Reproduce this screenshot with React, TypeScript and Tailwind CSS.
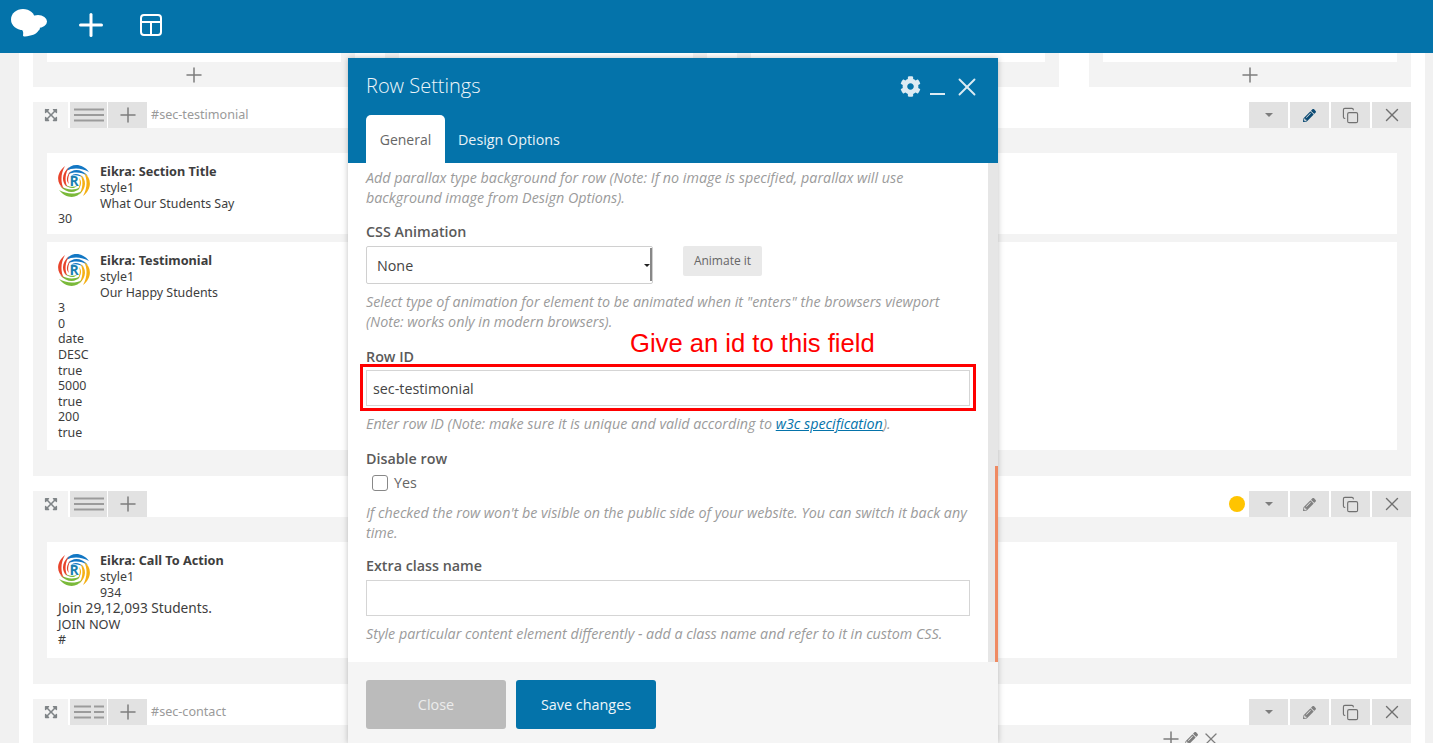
import React from "react";
import { Plus, X, Copy } from "lucide-react";
import { FaExpandArrowsAlt, FaPencilAlt, FaCog } from "react-icons/fa";

const bgFont = { fontFamily: '"Noto Sans", sans-serif' };

function Swirl() {
  const blades = [
    { c: "#1277c4", a: 0 },
    { c: "#f5b014", a: 90 },
    { c: "#7ab93a", a: 180 },
    { c: "#e8432a", a: 270 },
  ];
  return (
    <svg width="34" height="34" viewBox="0 0 34 34" className="-ml-px shrink-0" aria-hidden>
      {blades.map((b) => (
        <g key={b.a} transform={`rotate(${b.a} 17 17)`} fill={b.c}>
          <path d="M9 7 C14 -1 25 -1 32 8 C25 4 16 3 9 7Z" />
          <path d="M11 10.5 C15 4.5 24 4 31 12 C24 8 17 7.5 11 10.5Z" />
          <path d="M14 12 C17 9 22 9 27 14 C22 11 18 10.5 14 12Z" />
        </g>
      ))}
      <text x="17" y="22" textAnchor="middle" fontSize="14" fontWeight="700" fill="#1a7fb0" style={{ fontFamily: '"Open Sans", sans-serif' }}>
        R
      </text>
    </svg>
  );
}

function Bars({ split }: { split?: boolean }) {
  return (
    <svg width="30" height="14" viewBox="0 0 30 14" aria-hidden>
      {[1.5, 7, 12.5].map((y) => (
        <g key={y}>
          {split ? (
            <>
              <rect x="0" y={y - 1} width="17" height="2" fill="#9b9b9b" />
              <rect x="20" y={y - 1} width="10" height="2" fill="#9b9b9b" />
            </>
          ) : (
            <rect x="0" y={y - 1} width="30" height="2" fill="#9b9b9b" />
          )}
        </g>
      ))}
    </svg>
  );
}

function RowHeader({ id, split, active, dot }: { id?: string; split?: boolean; active?: boolean; dot?: boolean }) {
  return (
    <div className="flex h-[26px] items-stretch justify-between bg-white">
      <div className="flex items-stretch">
        <div className="flex w-[35px] items-center justify-center bg-[#f3f3f3] text-[#7f8487]">
          <FaExpandArrowsAlt size={14} />
        </div>
        <div className="ml-[2px] flex w-[37px] items-center justify-center bg-[#e2e2e2]">
          <Bars split={split} />
        </div>
        <div className="ml-px flex w-[39px] items-center justify-center bg-[#e2e2e2] text-[#7d7d7d]">
          <Plus size={24} strokeWidth={1.5} />
        </div>
        {id && (
          <span className="ml-1 self-center text-[12.6px] text-[#9a9a9a]" style={bgFont}>
            {id}
          </span>
        )}
      </div>
      <div className="flex items-stretch gap-[2px]">
        {dot && <span className="mr-[2px] h-4 w-4 self-center rounded-full bg-[#ffc400]" />}
        <div className="flex w-[39px] items-center justify-center bg-[#e2e2e2]">
          <span className="h-0 w-0 border-x-[4px] border-t-[4px] border-x-transparent border-t-[#7d7d7d]" />
        </div>
        <div className={`flex w-[39px] items-center justify-center bg-[#e2e2e2] ${active ? "text-[#0b4a73]" : "text-[#808080]"}`}>
          <FaPencilAlt size={13} />
        </div>
        <div className="flex w-[39px] items-center justify-center bg-[#e2e2e2] text-[#707070]">
          <Copy size={17} strokeWidth={1.6} />
        </div>
        <div className="flex w-[39px] items-center justify-center bg-[#e2e2e2] text-[#707070]">
          <X size={22} strokeWidth={1.5} />
        </div>
      </div>
    </div>
  );
}

function Card({
  title,
  inner,
  rest,
  className,
  bigFirst,
}: {
  title: string;
  inner: string[];
  rest: string[];
  className: string;
  bigFirst?: boolean;
}) {
  return (
    <div className={`bg-white px-[11px] pt-[11px] text-[12.4px] leading-[15.6px] text-[#3d3d3d] ${className}`} style={bgFont}>
      <div className="flex gap-[9px]">
        <Swirl />
        <div className="pt-[0.4px]">
          <div className="text-[12.7px] font-bold">{title}</div>
          {inner.map((t) => (
            <div key={t}>{t}</div>
          ))}
        </div>
      </div>
      {rest.map((t, i) => (
        <div key={i} className={bigFirst && i === 0 ? "text-[13.7px] leading-[16.5px]" : bigFirst && i === 1 ? "text-[12.8px]" : ""}>
          {t}
        </div>
      ))}
    </div>
  );
}

function Hint({ children, className = "" }: { children: React.ReactNode; className?: string }) {
  return <p className={`text-[14.3px] italic leading-[20px] text-[#9b9b9b] ${className}`}>{children}</p>;
}

function Label({ children, className = "" }: { children: React.ReactNode; className?: string }) {
  return <div className={`-mb-[2px] text-[14.3px] font-semibold leading-[22px] text-[#5a5a5a] ${className}`}>{children}</div>;
}

function Modal() {
  return (
    <div
      className="absolute left-[348px] top-[58px] flex h-[685px] w-[650px] flex-col bg-white shadow-[0_0_6px_rgba(0,0,0,0.25)]"
      style={{ fontFamily: '"Open Sans", sans-serif' }}
    >
      <div className="h-[105px] shrink-0 bg-[#0473aa]">
        <div className="flex h-[57px] items-center justify-between pl-[18px] pr-[16px]">
          <span className="-mt-[2px] text-[20px] font-light text-[#eef6fa]">Row Settings</span>
          <div className="flex items-center text-[#dcebf3]">
            <FaCog size={21} />
            <span className="ml-[9px] mt-[14px] h-[2px] w-[15px] bg-[#dcebf3]" />
            <X size={30} strokeWidth={1.5} className="ml-[7px]" />
          </div>
        </div>
        <div className="flex pl-[18px] text-[14.3px]">
          <div className="flex h-[48px] w-[79px] items-center justify-center rounded-t-[5px] bg-white text-[14px] text-[#666]">General</div>
          <div className="flex h-[48px] items-center pl-[13px] pt-[2px] text-[#e8f2f7]">Design Options</div>
        </div>
      </div>
      <div className="relative flex h-[499px] shrink-0 overflow-hidden">
        <div className="flex-1 pl-[18px] pr-[18px] pt-[5px]">
          <Hint>
            Add parallax type background for row (Note: If no image is specified, parallax will use
            <br />
            background image from Design Options).
          </Hint>
          <Label className="mt-[13px]">CSS Animation</Label>
          <div className="mt-[5px] flex items-start">
            <div className="relative flex h-[38px] w-[287px] items-center rounded-[2px] border border-[#d0d0d0] pl-[10px] pt-[2px] text-[14.3px] text-[#444]">
              None
              <span className="absolute right-[2px] top-[17px] h-0 w-0 border-x-[3px] border-t-[3px] border-x-transparent border-t-[#222]" />
              <span className="absolute right-0 top-[1px] h-[33px] w-[2px] bg-[#888]" />
            </div>
            <div className="ml-[30px] flex h-[30px] w-[79px] items-center justify-center rounded-[2px] bg-[#e9e9e9] text-[12px] text-[#666]">
              Animate it
            </div>
          </div>
          <Hint className="mt-[8px]">
            Select type of animation for element to be animated when it "enters" the browsers viewport
            <br />
            (Note: works only in modern browsers).
          </Hint>
          <Label className="mt-[14px]">Row ID</Label>
          <div className="mt-[4px] flex h-[36px] items-center border border-[#d5d5d5] pl-[6px] pt-[2px] text-[14.3px] text-[#444]">sec-testimonial</div>
          <Hint className="mt-[8px]">
            Enter row ID (Note: make sure it is unique and valid according to{" "}
            <span className="text-[#0473aa] underline">w3c specification</span>).
          </Hint>
          <Label className="mt-[14px]">Disable row</Label>
          <div className="mt-[5px] flex items-center pl-[6px] text-[14.3px] leading-[20px] text-[#666]">
            <span className="h-[16px] w-[16px] rounded-[3px] border border-[#888] bg-white" />
            <span className="ml-[6px]">Yes</span>
          </div>
          <Hint className="mt-[10px]">
            If checked the row won't be visible on the public side of your website. You can switch it back any
            <br />
            time.
          </Hint>
          <Label className="mt-[12px]">Extra class name</Label>
          <div className="mt-[5px] h-[36px] border border-[#d5d5d5]" />
          <Hint className="mt-[8px]">Style particular content element differently - add a class name and refer to it in custom CSS.</Hint>
        </div>
        <div className="relative w-[10px] shrink-0 bg-[#e6e6e6]">
          <div className="absolute bottom-0 right-0 h-[196px] w-[3px] bg-[#ef8a62]" />
        </div>
      </div>
      <div className="flex flex-1 items-start gap-[10px] bg-[#f5f5f5] pl-[18px] pt-[18px] text-[14.4px]">
        <div className="flex h-[49px] w-[140px] items-center justify-center rounded-[3px] bg-[#bbbbbb] text-[#ececec]">Close</div>
        <div className="flex h-[49px] w-[140px] items-center justify-center rounded-[3px] bg-[#0473aa] text-[#eef6fa]">Save changes</div>
      </div>
    </div>
  );
}

export default function App() {
  return (
    <div className="relative h-[743px] w-[1433px] overflow-hidden bg-[#f1f1f1]">
      <header className="flex h-[53px] items-center bg-[#0473aa] pb-[3px] pl-[11px] text-white">
        <svg width="36" height="28" viewBox="0 0 36 28" fill="white" className="mb-[5px]" aria-hidden>
          <ellipse cx="12" cy="10.5" rx="12" ry="10.5" />
          <ellipse cx="27" cy="12.5" rx="9" ry="6.5" />
          <ellipse cx="20" cy="19" rx="9" ry="5" />
          <path d="M11 21 C14 24 10 28 14 27.5 C20 27 26 25 27 22 Z" />
        </svg>
        <Plus size={36} strokeWidth={2} className="ml-[26px]" />
        <svg width="24" height="24" viewBox="0 0 24 24" fill="none" stroke="white" strokeWidth="2" className="ml-[30px]" aria-hidden>
          <rect x="2" y="2" width="20" height="20" rx="3" />
          <path d="M2 9h20M12 9v13" />
        </svg>
      </header>
      <main className="ml-[19px] mr-[8px] h-[690px] overflow-hidden bg-white px-[14px]">
        <div className="grid grid-cols-4 gap-x-[30px]">
          {[0, 1, 2, 3].map((i) => (
            <div key={i} className="h-[34px] bg-[#f3f3f3] px-[14px]">
              <div className="h-[9px] bg-white" />
              <div className="flex h-[25px] items-center justify-center text-[#7d7d7d]">
                <Plus size={24} strokeWidth={1.5} />
              </div>
            </div>
          ))}
        </div>
        <section className="mt-[15px] h-[374px] bg-[#f3f3f3]">
          <RowHeader id="#sec-testimonial" active />
          <div className="px-[14px] pt-[25px]">
            <Card className="h-[81px]" title="Eikra: Section Title" inner={["style1", "What Our Students Say"]} rest={["30"]} />
            <Card
              className="mt-[8px] h-[208px]"
              title="Eikra: Testimonial"
              inner={["style1", "Our Happy Students"]}
              rest={["3", "0", "date", "DESC", "true", "5000", "true", "200", "true"]}
            />
          </div>
        </section>
        <section className="mt-[15px] h-[193px] bg-[#f3f3f3]">
          <RowHeader dot />
          <div className="px-[14px] pt-[25px]">
            <Card bigFirst className="h-[116px]" title="Eikra: Call To Action" inner={["style1", "934"]} rest={["Join 29,12,093 Students.", "JOIN NOW", "#"]} />
          </div>
        </section>
        <section className="mt-[15px] h-[60px] bg-[#f3f3f3]">
          <RowHeader id="#sec-contact" split />
          <div className="flex justify-end pr-[190px] pt-[2px] text-[#7d7d7d]">
            <Plus size={24} strokeWidth={1.5} />
            <FaPencilAlt size={13} className="ml-[2px] mt-[5px]" />
            <X size={20} strokeWidth={1.5} className="ml-[3px] mt-[2px]" />
          </div>
        </section>
      </main>
      <Modal />
      <div className="pointer-events-none absolute left-[360px] top-[364px] h-[47px] w-[616px] border-[3px] border-[#ff0000]" />
      <div className="absolute left-[630px] top-[328px] text-[25.6px] leading-[30px] text-[#ff0000]" style={{ fontFamily: '"Liberation Sans", sans-serif' }}>
        Give an id to this field
      </div>
    </div>
  );
}
